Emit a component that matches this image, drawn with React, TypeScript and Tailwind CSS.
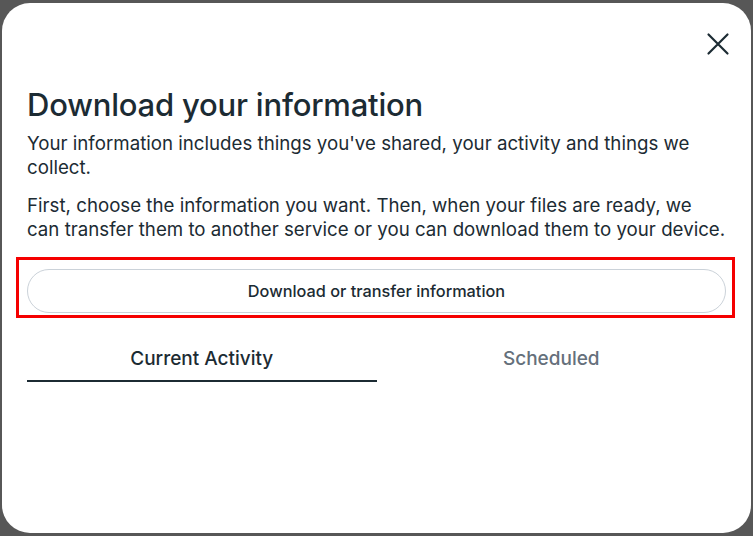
import React, { useState } from 'react';

const tabs = ['Current Activity', 'Scheduled'];

const CloseIcon: React.FC = () => (
  <svg width="24" height="24" viewBox="0 0 24 24" fill="none" stroke="#1c2b33" strokeWidth="2.2" strokeLinecap="round">
    <path d="M2.5 2.5L21.5 21.5M21.5 2.5L2.5 21.5" />
  </svg>
);

const App: React.FC = () => {
  const [active, setActive] = useState(0);

  return (
    <div className="h-[536px] w-[753px] bg-[#575757] px-[2px] pt-[3px] pb-[3px] font-['Inter',sans-serif]">
      <div className="flex h-full flex-col rounded-[28px] bg-white pl-[25px] pr-[25px]">
        <div className="-mr-[4px] flex justify-end pt-[29px]">
          <button className="flex h-6 w-6 items-center justify-center" aria-label="Close">
            <CloseIcon />
          </button>
        </div>

        <h1 className="mt-[32px] text-[31px] leading-[34px] font-medium tracking-[-0.2px] text-[#1c2b33]">
          Download your information
        </h1>

        <p className="mt-[10px] text-[18.7px] leading-[24px] text-[#1c2b33]">
          Your information includes things you've shared, your activity and things we collect.
        </p>
        <p className="mt-[14px] text-[18.7px] leading-[24px] text-[#1c2b33]">
          First, choose the information you want. Then, when your files are ready, we can transfer them to another service or you can download them to your device.
        </p>

        <div className="mt-[15px] -ml-[11px] -mr-[9px] border-[3px] border-[#f50000] pt-[9px] pb-[2px] pl-[8px] pr-[6px]">
          <button className="flex h-[44px] w-full items-center justify-center rounded-full border border-[#cbd2d9] bg-white text-[16.3px] font-medium text-[#1c2b33]">
            Download or transfer information
          </button>
        </div>

        <div className="mt-[29px] grid grid-cols-2">
          {tabs.map((tab, i) => (
            <button
              key={tab}
              onClick={() => setActive(i)}
              className={
                i === active
                  ? 'border-b-2 border-[#1c2b33] pb-[9px] text-[19px] leading-[24px] font-medium text-[#1c2b33]'
                  : 'border-b-2 border-transparent pb-[9px] text-[19px] leading-[24px] font-medium text-[#65707b]'
              }
            >
              {tab}
            </button>
          ))}
        </div>
      </div>
    </div>
  );
};

export default App;
